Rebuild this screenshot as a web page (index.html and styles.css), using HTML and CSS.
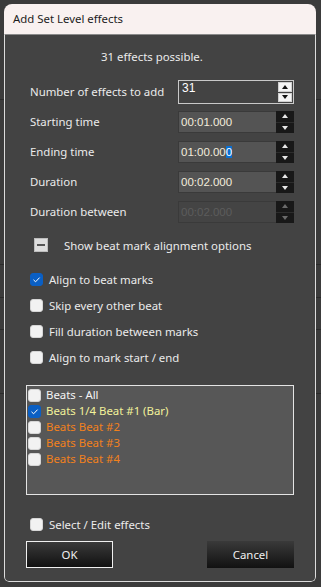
FILE: index.html
```html
<!DOCTYPE html>
<html>
<head>
<meta charset="utf-8">
<link rel="stylesheet" href="styles.css">
</head>
<body>
<div class="window">
  <div class="titlebar">Add Set Level effects</div>
  <div class="content">
    <div class="headline">31 effects possible.</div>
    <div class="form">
      <div class="row">
        <span class="label">Number of effects to add</span>
        <div class="field first"><span class="val">31</span>
          <div class="spin lspin"><span class="btn"><i class="up"></i></span><span class="btn"><i class="down"></i></span></div>
        </div>
      </div>
      <div class="row">
        <span class="label">Starting time</span>
        <div class="field"><span class="val">00:01.000</span>
          <div class="spin dspin"><span class="btn"><i class="up"></i></span><span class="btn"><i class="down"></i></span></div>
        </div>
      </div>
      <div class="row">
        <span class="label">Ending time</span>
        <div class="field"><span class="val">01:00.00<span class="sel">0</span></span>
          <div class="spin dspin"><span class="btn"><i class="up"></i></span><span class="btn"><i class="down"></i></span></div>
        </div>
      </div>
      <div class="row">
        <span class="label">Duration</span>
        <div class="field"><span class="val">00:02.000</span>
          <div class="spin dspin"><span class="btn"><i class="up"></i></span><span class="btn"><i class="down"></i></span></div>
        </div>
      </div>
      <div class="row">
        <span class="label">Duration between</span>
        <div class="field disabled"><span class="val">00:02.000</span>
          <div class="spin dspin"><span class="btn"><i class="up"></i></span><span class="btn"><i class="down"></i></span></div>
        </div>
      </div>
    </div>

    <div class="toggle-row">
      <span class="toggle"><span class="bar"></span></span>
      <span class="text">Show beat mark alignment options</span>
    </div>

    <div class="checks">
      <div class="check"><span class="box on"><svg viewBox="0 0 13 13" width="13" height="13"><polyline points="3.5,6.8 5.6,8.8 9.6,4.6" fill="none" stroke="#fff" stroke-width="1"/></svg></span><span class="text">Align to beat marks</span></div>
      <div class="check"><span class="box"></span><span class="text">Skip every other beat</span></div>
      <div class="check"><span class="box"></span><span class="text">Fill duration between marks</span></div>
      <div class="check"><span class="box"></span><span class="text">Align to mark start / end</span></div>
    </div>

    <div class="list">
      <div class="item white"><span class="box"></span>Beats - All</div>
      <div class="item yellow"><span class="box on"><svg viewBox="0 0 13 13" width="13" height="13"><polyline points="3.5,6.8 5.6,8.8 9.6,4.6" fill="none" stroke="#fff" stroke-width="1"/></svg></span>Beats 1/4 Beat #1 (Bar)</div>
      <div class="item orange"><span class="box"></span>Beats Beat #2</div>
      <div class="item orange"><span class="box"></span>Beats Beat #3</div>
      <div class="item orange"><span class="box"></span>Beats Beat #4</div>
    </div>

    <div class="check select-row"><span class="box"></span><span class="text">Select / Edit effects</span></div>

    <div class="buttons">
      <button class="button default">OK</button>
      <button class="button">Cancel</button>
    </div>
  </div>
</div>
</body>
</html>
```
FILE: styles.css
```css
html, body {
  margin: 0;
  padding: 0;
}
body {
  width: 321px;
  height: 587px;
  overflow: hidden;
  background-color: #3b3b3b;
  background-image:
    linear-gradient(to bottom, transparent 99px, #2a2a2a 99px, #2a2a2a 100px, transparent 100px, transparent 264px, #2a2a2a 264px, #2a2a2a 265px, transparent 265px, transparent 297px, #2a2a2a 297px, #2a2a2a 298px, transparent 298px, transparent 329px, #2a2a2a 329px, #2a2a2a 330px, transparent 330px, transparent 393px, #2a2a2a 393px, #2a2a2a 394px, transparent 394px);
  font-family: "Noto Sans", "Open Sans", sans-serif;
}
.window {
  width: 312px;
  height: 578px;
  margin: 4px 0 0 4px;
  display: flex;
  flex-direction: column;
  border-radius: 8px 8px 5px 5px;
  overflow: hidden;
}
.titlebar {
  flex: none;
  height: 30px;
  line-height: 29px;
  background: #f9f1f0;
  color: #1c1c1c;
  font-size: 11.4px;
  padding-left: 9px;
}
.content {
  flex: 1;
  background: #434343;
  border: 1px solid #dcdcdc;
  border-top-color: #8a8a8a;
  border-radius: 0 0 5px 5px;
  display: flex;
  flex-direction: column;
  color: #ebebeb;
  font-size: 11.4px;
}
.headline {
  margin-top: 14px;
  height: 16px;
  line-height: 16px;
  padding-left: 96px;
}
.form {
  margin-top: 12px;
  padding-left: 25px;
  display: flex;
  flex-direction: column;
}
.row {
  height: 30px;
  display: grid;
  grid-template-columns: 148px 116px;
  align-items: center;
}
.label {
  line-height: 16px;
}
.field {
  height: 22px;
  box-sizing: border-box;
  display: flex;
  align-items: stretch;
  background: #545454;
  border: 1px solid #3a3a3a;
  border-right: none;
  font-family: "Liberation Sans", Arial, sans-serif;
  font-size: 11.5px;
  color: #f3ecdc;
}
.field .val {
  flex: 1;
  padding-left: 2px;
  line-height: 20px;
}
.field.first {
  height: 24px;
  background: #434343;
  border: 1px solid #c9c9c9;
  color: #ffffff;
  font-size: 12px;
}
.field.first .val {
  line-height: 14px;
  padding-left: 3px;
}
.field.disabled {
  background: #444444;
  color: #5c5c5c;
}
.sel {
  background: #0a6fd1;
  color: #ffffff;
}
.spin {
  display: flex;
  flex-direction: column;
  flex: none;
}
.spin .btn {
  flex: 1;
  display: flex;
  align-items: center;
  justify-content: center;
}
.dspin {
  width: 18px;
  margin: -1px 0;
  background: #181818;
}
.dspin .btn + .btn {
  border-top: 1px solid #2c2c2c;
}
.lspin {
  width: 14px;
  margin: 1px 1px 1px 0;
  gap: 1px;
}
.lspin .btn {
  background: #f4f4f4;
  border: 1px solid #d0d0d0;
}
.up, .down {
  width: 0;
  height: 0;
  border-left: 3.5px solid transparent;
  border-right: 3.5px solid transparent;
}
.up { border-bottom: 4px solid #e8e8e8; }
.down { border-top: 4px solid #e8e8e8; }
.lspin .up { border-bottom-color: #111; }
.lspin .down { border-top-color: #111; }
.disabled .up { border-bottom-color: #6a6a6a; }
.disabled .down { border-top-color: #6a6a6a; }

.toggle-row {
  margin-top: 8px;
  height: 20px;
  display: flex;
  align-items: center;
  padding-left: 29px;
}
.toggle {
  width: 14px;
  height: 14px;
  box-sizing: border-box;
  background: #dedede;
  border: 1px solid #bdbdbd;
  display: flex;
  align-items: center;
  justify-content: center;
  margin-right: 16px;
}
.toggle .bar {
  width: 8px;
  height: 2px;
  background: #555;
}
.checks {
  margin-top: 14px;
  display: flex;
  flex-direction: column;
  gap: 6px;
}
.check {
  height: 20px;
  display: flex;
  align-items: center;
  padding-left: 25px;
}
.box {
  width: 13px;
  height: 13px;
  box-sizing: border-box;
  flex: none;
  border-radius: 3px;
  background: #f2f2f2;
  border: 1px solid #d6d6d6;
  display: inline-flex;
}
.box.on {
  background: #0a5fc4;
  border-color: #0a5fc4;
}
.box.on svg {
  margin: -1px;
}
.check .box {
  margin-right: 6px;
}
.list {
  margin: 18px 0 0 21px;
  width: 268px;
  height: 110px;
  box-sizing: border-box;
  border: 1px solid #e4e4e4;
  background: #575757;
  padding: 1px 0 0 1px;
  display: flex;
  flex-direction: column;
}
.item {
  height: 16px;
  display: flex;
  align-items: center;
  line-height: 16px;
}
.item .box {
  margin-right: 5px;
}
.white { color: #f4f4f4; }
.yellow { color: #f2f29a; }
.orange { color: #f2811c; }
.select-row {
  margin-top: 19px;
}
.buttons {
  margin-top: 7px;
  padding: 0 21px;
  display: flex;
  justify-content: space-between;
}
.button {
  width: 87px;
  height: 27px;
  box-sizing: border-box;
  border: none;
  background: linear-gradient(to bottom, #3a3a3a, #111111);
  color: #f0f0f0;
  font-family: "Noto Sans", sans-serif;
  font-size: 11.4px;
  padding: 0;
}
.button.default {
  border: 1px solid #f0f0f0;
}
```
